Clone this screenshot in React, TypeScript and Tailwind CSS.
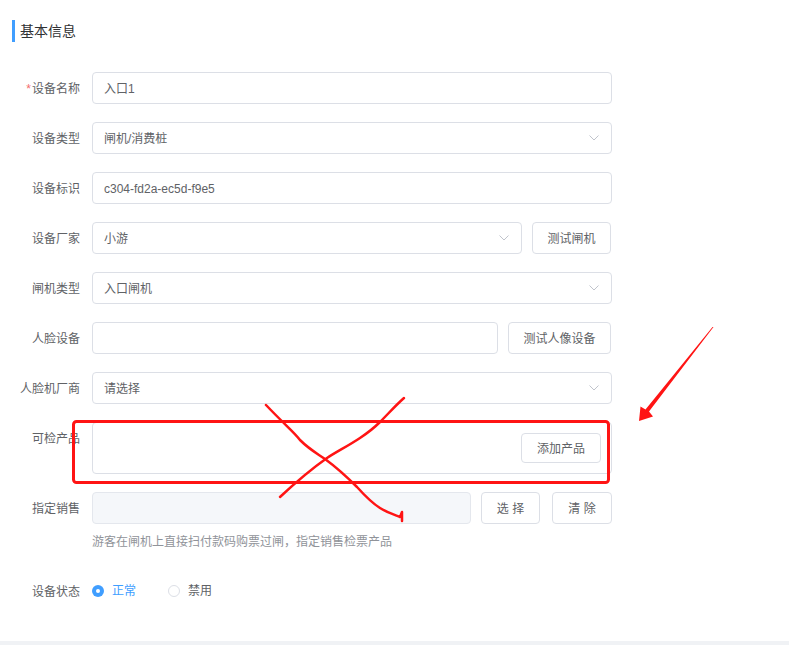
import type { ReactNode } from "react";

const font = { fontFamily: '"Liberation Sans", "Noto Sans CJK SC", sans-serif' };

function Chevron() {
  return (
    <svg width="10" height="6" viewBox="0 0 10 6" fill="none" className="shrink-0">
      <path d="M0.5 0.5 L5 5 L9.5 0.5" stroke="#c0c4cc" strokeWidth="1" />
    </svg>
  );
}

function Row({ label, required, children, top }: { label: string; required?: boolean; children: ReactNode; top?: boolean }) {
  return (
    <div className={`flex ${top ? "items-start" : "items-center"} mb-[18px]`}>
      <label className="w-[80px] shrink-0 h-8 leading-8 pt-[1px] text-right text-xs text-[#606266] whitespace-nowrap">
        {required && <span className="text-[#f56c6c] mr-[1px]">*</span>}
        {label}
      </label>
      <div className="ml-3 flex items-center gap-3">{children}</div>
    </div>
  );
}

function Input({ value, w = "w-[520px]" }: { value?: string; w?: string }) {
  return (
    <div className={`${w} h-8 border border-[#dcdfe6] rounded bg-white px-[11px] pt-[1px] flex items-center text-xs text-[#606266]`}>
      {value}
    </div>
  );
}

function Select({ value, w = "w-[520px]" }: { value: string; w?: string }) {
  return (
    <div className={`${w} h-8 border border-[#dcdfe6] rounded bg-white pl-[11px] pr-[12px] flex items-center justify-between text-xs text-[#606266]`}>
      <span className="pt-[1px]">{value}</span>
      <Chevron />
    </div>
  );
}

function Btn({ children, w }: { children: ReactNode; w: string }) {
  return (
    <button className={`${w} h-8 border border-[#dcdfe6] rounded bg-white pt-[1px] text-xs text-[#606266] flex items-center justify-center`}>
      {children}
    </button>
  );
}

function Radio({ label, checked }: { label: string; checked?: boolean }) {
  return (
    <div className="flex items-center mr-8">
      {checked ? (
        <span className="w-3 h-3 rounded-full bg-[#409eff] flex items-center justify-center">
          <span className="w-1 h-1 rounded-full bg-white" />
        </span>
      ) : (
        <span className="w-3 h-3 rounded-full border border-[#dcdfe6] bg-white" />
      )}
      <span className={`ml-2 text-xs ${checked ? "text-[#409eff]" : "text-[#606266]"}`}>{label}</span>
    </div>
  );
}

export default function App() {
  return (
    <div className="relative h-[645px] bg-white flex flex-col overflow-hidden" style={font}>
      <div className="pt-5 pl-3">
        <div className="h-[22px] border-l-[3px] border-[#409eff] pl-[5px] flex items-center text-sm text-[#303133]">
          基本信息
        </div>
      </div>

      <div className="mt-[30px]">
        <Row label="设备名称" required>
          <Input value="入口1" />
        </Row>
        <Row label="设备类型">
          <Select value="闸机/消费桩" />
        </Row>
        <Row label="设备标识">
          <Input value="c304-fd2a-ec5d-f9e5" />
        </Row>
        <Row label="设备厂家">
          <Select value="小游" w="w-[430px]" />
          <Btn w="w-[79px] -ml-[2px]">测试闸机</Btn>
        </Row>
        <Row label="闸机类型">
          <Select value="入口闸机" />
        </Row>
        <Row label="人脸设备">
          <Input w="w-[406px]" />
          <Btn w="w-[103px] -ml-[2px]">测试人像设备</Btn>
        </Row>
        <Row label="人脸机厂商">
          <Select value="请选择" />
        </Row>
        <Row label="可检产品" top>
          <div className="w-[520px] h-[52px] border border-[#dcdfe6] rounded bg-white flex items-start justify-end pt-[10px] pr-[10px]">
            <button className="w-[80px] h-[30px] border border-[#dcdfe6] rounded bg-white pt-[1px] text-xs text-[#606266]">
              添加产品
            </button>
          </div>
        </Row>
        <div className="flex items-start">
          <label className="w-[80px] shrink-0 h-8 leading-8 pt-[1px] text-right text-xs text-[#606266]">指定销售</label>
          <div className="ml-3">
            <div className="flex items-center">
              <div className="w-[379px] h-8 border border-[#e4e7ed] rounded bg-[#f5f7fa]" />
              <Btn w="w-[59px] ml-[10px]">选&nbsp;择</Btn>
              <Btn w="w-[60px] ml-[12px]">清&nbsp;除</Btn>
            </div>
            <div className="mt-2 leading-5 text-xs text-[#909399]">
              游客在闸机上直接扫付款码购票过闸，指定销售检票产品
            </div>
          </div>
        </div>
        <div className="flex items-center mt-[23px]">
          <label className="w-[80px] shrink-0 h-8 leading-8 pt-[1px] text-right text-xs text-[#606266]">设备状态</label>
          <div className="ml-3 flex items-center">
            <Radio label="正常" checked />
            <Radio label="禁用" />
          </div>
        </div>
      </div>

      <div className="mt-auto h-1 bg-[#f0f2f5]" />

      <svg className="absolute inset-0 pointer-events-none" width="789" height="645" viewBox="0 0 789 645">
        <rect x="73.5" y="421.5" width="535" height="61" rx="3" fill="none" stroke="#ff1414" strokeWidth="3" />
        <path
          d="M266 405 C285 425 295 433 300 440 C310 450 318 454 325 459 C340 470 348 478 357 487 C366 497 372 503 380 508 C388 513 395 515 400 517 L402 512 L402 521"
          fill="none"
          stroke="#ff1414"
          strokeWidth="2.5"
          strokeLinecap="round"
          strokeLinejoin="round"
        />
        <path
          d="M404 398 C395 406 388 414 380 422 C372 430 366 434 360 438 C348 446 336 452 327 458 C310 470 295 483 280 497"
          fill="none"
          stroke="#ff1414"
          strokeWidth="2.5"
          strokeLinecap="round"
          strokeLinejoin="round"
        />
        <polygon
          points="713.5,327 649,411.5 653,416.5 639,421 640.5,406.5 645.5,409.5 712.5,327"
          fill="#ff1414"
        />
      </svg>
    </div>
  );
}
